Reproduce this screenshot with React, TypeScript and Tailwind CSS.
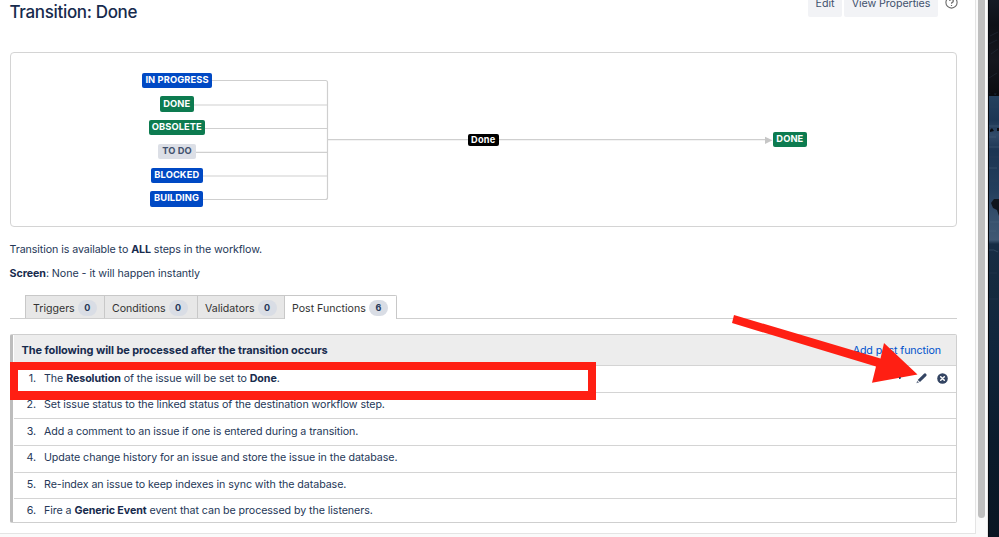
import React from "react";

type Status = { label: string; left: number; top: number; width: number; tone: string };

const BLUE = "bg-[#0049c4] text-white";
const GREEN = "bg-[#0d7b50] text-white";
const GREY = "bg-[#dcdfe6] text-[#42526e]";

const statuses: Status[] = [
  { label: "IN PROGRESS", left: 142, top: 72.5, width: 70, tone: BLUE },
  { label: "DONE", left: 159.5, top: 96.3, width: 34.5, tone: GREEN },
  { label: "OBSOLETE", left: 148.5, top: 120, width: 56.5, tone: GREEN },
  { label: "TO DO", left: 158, top: 143.7, width: 38, tone: GREY },
  { label: "BLOCKED", left: 151, top: 167.5, width: 51.5, tone: BLUE },
  { label: "BUILDING", left: 150, top: 191.2, width: 53, tone: BLUE },
  { label: "DONE", left: 773, top: 131.5, width: 33.7, tone: GREEN },
];

const tabs = [
  { label: "Triggers", count: 0, box: "w-[79px]" },
  { label: "Conditions", count: 0, box: "w-[93px]" },
  { label: "Validators", count: 0, box: "w-[87px]" },
];

const rows: { height: string; body: React.ReactNode }[] = [
  { height: "h-[27px]", body: <>The <b>Resolution</b> of the issue will be set to <b>Done</b>.</> },
  { height: "h-[26px]", body: "Set issue status to the linked status of the destination workflow step." },
  { height: "h-[27px]", body: "Add a comment to an issue if one is entered during a transition." },
  { height: "h-[27px] pb-[1px]", body: "Update change history for an issue and store the issue in the database." },
  { height: "h-[26px]", body: "Re-index an issue to keep indexes in sync with the database." },
  { height: "h-[23px] pt-[2px]", body: <>Fire a <b>Generic Event</b> event that can be processed by the listeners.</> },
];

function Diagram() {
  return (
    <section className="relative mx-[10px] mt-[28px] h-[175px] w-[947px] shrink-0 rounded-[4px] border border-[#d4d4d4] bg-white">
      <div className="absolute -left-[11px] -top-[53px] h-[227px] w-[960px]">
        <svg className="absolute inset-0" width="960" height="227" fill="none" stroke="#cfcfcf" strokeWidth="1.2">
          <path d="M212 80.5H325.5Q327.5 80.5 327.5 82.5V197.5Q327.5 199.5 325.5 199.5H203" />
          <path d="M194 105H327.5M205 128.5H327.5M196 152.3H327.5M203 176H327.5M327.5 139.7H765" />
          <path d="M765 136.7L772.5 140.3L765 144Z" fill="#c6c6c6" stroke="none" />
        </svg>
        {statuses.map((s, i) => (
          <span
            key={i}
            className={"absolute flex h-[15.4px] items-center justify-center whitespace-nowrap rounded-[2px] pb-px text-[9.3px] font-bold tracking-[0.1px] " + s.tone}
            style={{ left: s.left, top: s.top, width: s.width }}
          >
            {s.label}
          </span>
        ))}
        <span className="absolute left-[467.5px] top-[134px] flex h-[12.3px] w-[31.5px] items-center justify-center rounded-[2px] bg-black text-[9.2px] font-bold tracking-[0.2px] text-white">
          Done
        </span>
      </div>
    </section>
  );
}

function Tabs() {
  return (
    <nav className="mx-[10px] mt-[13px] flex h-[24px] w-[947px] shrink-0 border-b border-[#cfcfcf] pl-[15px] text-[10.6px] text-[#333]">
      {tabs.map((t) => (
        <div key={t.label} className={"flex h-[23px] items-center border-l border-t border-[#c8c8c8] bg-[#e7e7e7] pl-[7px] " + t.box}>
          <span className="mt-[3px]">{t.label}</span>
          <span className="ml-[3px] mt-px flex h-[16px] w-[19px] items-center justify-center rounded-full bg-[#d9dde5] text-[9px] font-bold text-[#253858]">{t.count}</span>
        </div>
      ))}
      <div className="flex h-[24px] w-[113px] items-center rounded-tr-[2px] border-x border-t border-[#c8c8c8] bg-white pl-[7px]">
        <span className="mt-[2px]">Post Functions</span>
        <span className="ml-[3px] flex h-[16px] w-[19px] items-center justify-center rounded-full bg-[#d9dde5] text-[9px] font-bold text-[#253858]">6</span>
      </div>
    </nav>
  );
}

function PostFunctions() {
  return (
    <section className="mx-[10px] mt-[15px] w-[947px] shrink-0 rounded-[2px] border-b border-l-[3px] border-r border-t border-b-[#cfcfcf] border-l-[#bdbdbd] border-r-[#cfcfcf] border-t-[#cfcfcf] pl-px">
      <header className="flex h-[31px] items-center justify-between border-b border-[#d4d4d4] bg-[#ededed] pl-[7.5px] pr-[15px] text-[11px]">
        <b className="tracking-[-0.08px]">The following will be processed after the transition occurs</b>
        <a className="mt-[2px] text-[10.7px] tracking-[-0.1px] text-[#0052cc]">Add post function</a>
      </header>
      <ol>
        {rows.map((r, i) => (
          <li key={i} className={"flex items-center text-[10.7px] tracking-[-0.08px] text-[#253858] " + r.height + (i < 5 ? " border-b border-[#d4d4d4]" : "")}>
            <span className="w-[22px] text-right">{i + 1}.</span>
            <span className="ml-[8px] flex-1 whitespace-nowrap [&_b]:text-[#172b4d]">{r.body}</span>
            {i === 0 && (
              <span className="-mt-[2px] mr-[8px] flex items-center gap-[10px]">
                <svg width="11" height="11" viewBox="0 0 11 11" fill="#344563">
                  <path d="M1.7 7L8 .7Q8.9-.1 9.7.6L10.3 1.2Q11 2 10.2 2.9L4 9.1Z" />
                  <path d="M1.2 7.7L3.2 9.6L.4 10.3Z" opacity=".7" />
                </svg>
                <svg width="11" height="11" viewBox="0 0 11 11">
                  <circle cx="5.5" cy="5.5" r="5.3" fill="#344563" />
                  <path d="M3.7 3.7L7.3 7.3M7.3 3.7L3.7 7.3" stroke="white" strokeWidth="1.5" strokeLinecap="round" />
                </svg>
              </span>
            )}
          </li>
        ))}
      </ol>
    </section>
  );
}

function Wallpaper() {
  return (
    <aside className="h-full w-[11px] shrink-0 border-l border-[#05080e] bg-[linear-gradient(180deg,#141a25_0px,#0d1017_25px,#15171e_60px,#0b0c10_93px,#26425f_95px,#1c3654_120px,#314b69_135px,#1c3553_150px,#243e5c_190px,#354f6c_215px,#405873_240px,#172d45_244px,#162b40_275px,#10253b_350px,#0b1b2c_440px,#0a1623_537px)]">
      <svg width="10" height="537">
        <path d="M0 94L4 92L6 95L10 91V96H0Z" fill="#090b0f" />
        <path d="M1 130L3 128L5 131L1 132ZM8 128H10V131H8Z" fill="#080b10" />
        <path d="M10 199L5 199L2 203L4 208L8 210L10 216Z" fill="#10151d" />
        <path d="M0 126H10M0 137H7M0 147H10M0 168H8M1 222H10M0 231H7M0 250Q5 249 9 252" stroke="#526a82" strokeWidth=".7" opacity=".6" fill="none" />
        <path d="M1 36L9 32M0 44L8 40M2 54L9 49M0 78L8 73M0 107H9M0 157H10M0 181H9M0 273H8M0 299H9" stroke="#34445a" strokeWidth=".6" opacity=".5" />
      </svg>
    </aside>
  );
}

export default function App() {
  return (
    <div className="relative flex h-[537px] w-[999px] overflow-hidden bg-[#fafafa] font-['Inter',sans-serif] text-[#172b4d]">
      <main className="flex h-[534px] w-[976px] shrink-0 flex-col border-b border-r border-[#e4e4e4] bg-white">
        <header className="flex h-[24px] shrink-0 items-start justify-between pl-[9.5px] pr-[17px]">
          <h1 className="mt-[1px] text-[17px] font-medium leading-[22px] tracking-[-0.33px]">Transition: Done</h1>
          <div className="flex text-[10.7px] text-[#42526e]">
            <span className="flex h-[17px] w-[34px] justify-center rounded-b-[2px] bg-[#f2f3f6]"><span className="-mt-[4px]">Edit</span></span>
            <span className="ml-[2px] flex h-[17px] w-[94px] justify-center rounded-b-[2px] bg-[#f2f3f6]"><span className="-mt-[4px] tracking-[-0.07px]">View Properties</span></span>
            <svg className="-mt-[4px] ml-[7px]" width="13" height="13" viewBox="0 0 13 13" fill="none" stroke="#6b6b6b">
              <circle cx="6.5" cy="6.5" r="5.6" strokeWidth="1.1" />
              <path d="M4.7 5Q4.8 3.4 6.5 3.4T8.3 4.9Q8.3 5.8 7.2 6.4Q6.5 6.8 6.5 7.8M6.5 8.9V10" strokeWidth="1.2" />
            </svg>
          </div>
        </header>
        <Diagram />
        <p className="ml-[9.5px] mt-[15px] text-[10.7px] leading-[16px] tracking-[-0.09px] text-[#253858]">Transition is available to <b className="text-[#172b4d]">ALL</b> steps in the workflow.</p>
        <p className="ml-[9.5px] mt-[8px] text-[10.7px] leading-[16px] tracking-[-0.06px] text-[#253858]"><b className="text-[#172b4d]">Screen</b>: None - it will happen instantly</p>
        <Tabs />
        <PostFunctions />
      </main>
      <div className="flex h-full w-[12px] shrink-0 border-r border-[#e5e5e5] pl-[2px]">
        <div className="h-[518px] w-[7px] rounded-b-full bg-[#bfbfbf]" />
      </div>
      <Wallpaper />
      <div className="absolute left-[10px] top-[362px] h-[38px] w-[586px] border-x-[8px] border-b-[9px] border-t-[8px] border-[#ff1f13]" />
      <svg className="absolute left-0 top-0" width="999" height="537" fill="#ff1f13">
        <path d="M734 315L880.5 358.5L884 343L917.5 374.5L872 382.8L876 366.5L732 323Z" />
        <path d="M899 377H901L900.5 379H899Z" fill="#344563" />
      </svg>
    </div>
  );
}
